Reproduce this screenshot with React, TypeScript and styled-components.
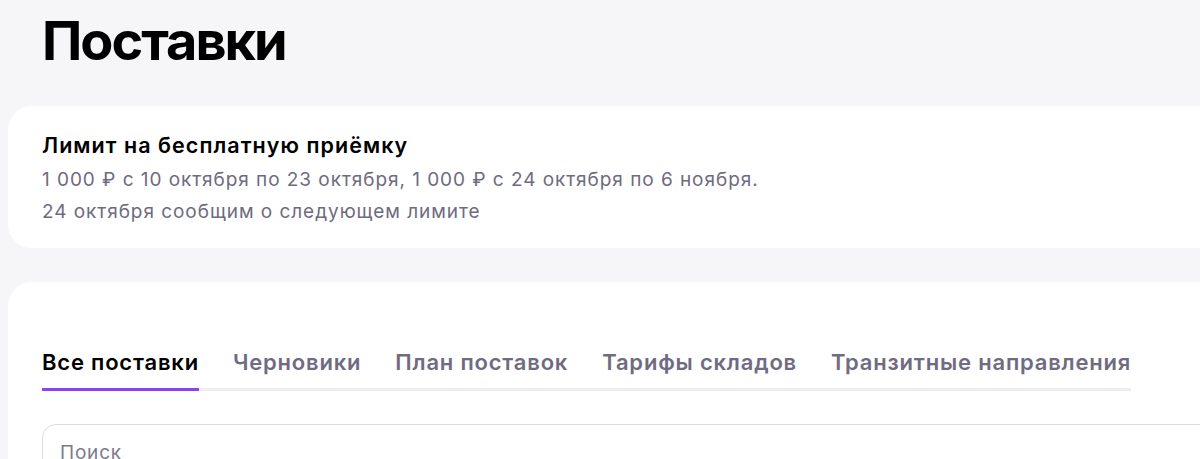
import React, { useState } from 'react';
import styled, { createGlobalStyle } from 'styled-components';

const GlobalStyle = createGlobalStyle`
  html, body {
    margin: 0;
    padding: 0;
    background: #f6f6f9;
    overflow: hidden;
  }
  body {
    font-family: Inter, "Noto Sans", "Liberation Sans", sans-serif;
    color: #000;
  }
`;

const tabs = ['Все поставки', 'Черновики', 'План поставок', 'Тарифы складов', 'Транзитные направления'];

const App: React.FC = () => {
  const [active, setActive] = useState<number>(0)
  const [search, setSearch] = useState<string>('')

  return (
    <>
      <GlobalStyle />
      <Page>
        <Title>Поставки</Title>
        <LimitCard>
          <LimitTitle>Лимит на бесплатную приёмку</LimitTitle>
          <LimitText>
            1 000 ₽ с 10 октября по 23 октября, 1 000 ₽ с 24 октября по 6 ноября.
            <br />
            24 октября сообщим о следующем лимите
          </LimitText>
        </LimitCard>
        <MainCard>
          <TabList>
            {tabs.map((t, i) => (
              <Tab key={t} $active={i === active} onClick={() => setActive(i)}>{t}</Tab>
            ))}
          </TabList>
          <SearchInput
            placeholder='Поиск'
            value={search}
            onChange={(e: React.ChangeEvent<HTMLInputElement>) => setSearch(e.target.value)}
          />
        </MainCard>
      </Page>
    </>
  )
};

export default App;

const Page = styled.div`
  width: 1260px;
  padding: 9px 0 0 8px;
  display: flex;
  flex-direction: column;
`;
const Title = styled.h1`
  margin: 0 0 33px 34px;
  font-size: 54px;
  line-height: 64px;
  font-weight: 700;
  letter-spacing: -2px;
`;
const LimitCard = styled.div`
  background: #fff;
  border-radius: 24px;
  padding: 25px 34px 20px;
`;
const LimitTitle = styled.div`
  font-size: 21.5px;
  line-height: 28px;
  font-weight: 600;
  letter-spacing: 1.05px;
  margin-bottom: 5px;
`;
const LimitText = styled.div`
  font-size: 19px;
  line-height: 32px;
  letter-spacing: 0.95px;
  color: #6e6b80;
`;
const MainCard = styled.div`
  margin-top: 34px;
  background: #fff;
  border-radius: 24px 24px 0 0;
  padding: 66px 34px 40px;
  display: flex;
  flex-direction: column;
  align-items: flex-start;
`;
const TabList = styled.div`
  display: flex;
  gap: 34px;
  border-bottom: 3px solid #eeeef1;
`;
const Tab = styled.button<{ $active: boolean }>`
  background: none;
  border: none;
  padding: 0 0 12px;
  margin-bottom: -3px;
  border-bottom: 3px solid ${p => p.$active ? '#8b43f6' : 'transparent'};
  font-family: inherit;
  font-size: 22px;
  line-height: 28px;
  font-weight: 600;
  letter-spacing: 0.8px;
  color: ${p => p.$active ? '#000' : '#6f6c82'};
  cursor: pointer;
`;
const SearchInput = styled.input`
  margin-top: 33px;
  width: 100%;
  box-sizing: border-box;
  height: 56px;
  border: 1px solid #dcdce1;
  border-radius: 14px;
  padding: 0 17px;
  font-family: inherit;
  font-size: 19px;
  letter-spacing: 0.8px;
  outline: none;
  &::placeholder {
    color: #7d7a8e;
  }
`;
